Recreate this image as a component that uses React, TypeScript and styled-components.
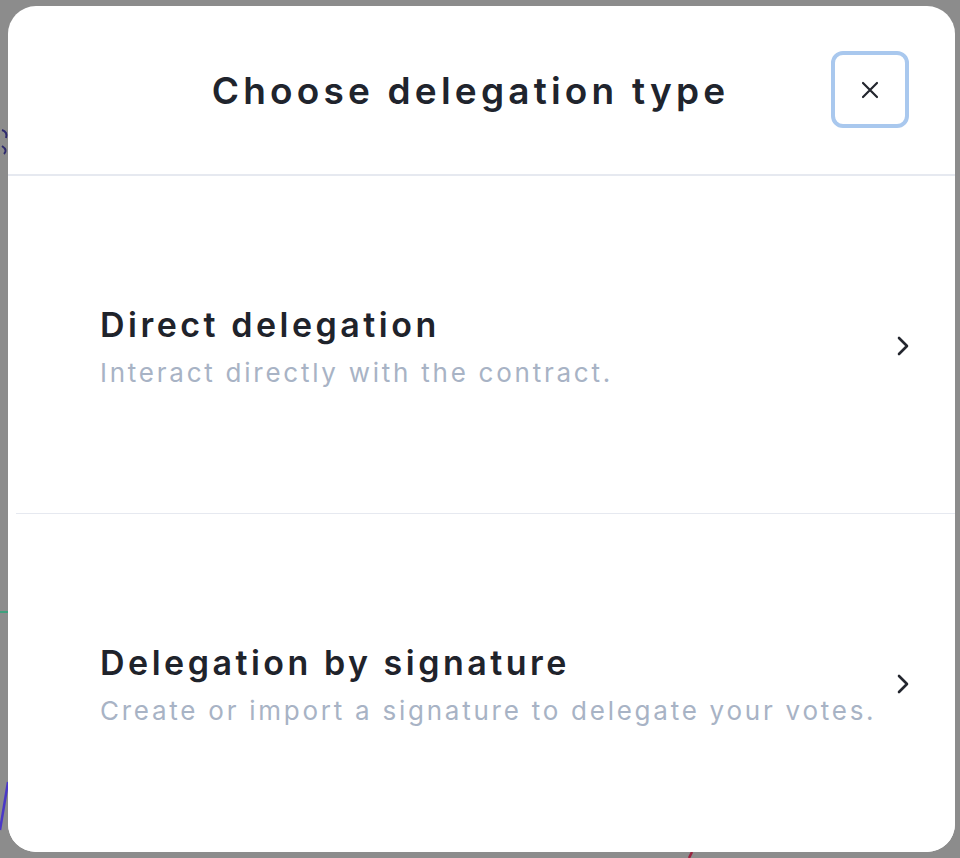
import React from "react";
import styled, { createGlobalStyle } from "styled-components";

const Global = createGlobalStyle`
  html, body { margin: 0; padding: 0; }
  body {
    background: #8c8c8c;
    font-family: Inter, "Noto Sans", sans-serif;
    width: 960px;
    height: 858px;
    overflow: hidden;
  }
`;

const Page = styled.div`
  position: relative;
  width: 960px;
  height: 858px;
  padding: 6px 5px 6px 8px;
  box-sizing: border-box;
`;

const Backdrop = styled.div`
  position: absolute;
  inset: 0;
  pointer-events: none;
`;

const BackdropMark = styled.svg`
  position: absolute;
  left: 0;
  top: 0;
`;

const Card = styled.div`
  position: relative;
  width: 947px;
  height: 846px;
  background: #ffffff;
  border-radius: 28px;
  display: flex;
  flex-direction: column;
  overflow: hidden;
`;

const Header = styled.header`
  height: 168px;
  flex: none;
  display: flex;
  align-items: center;
  justify-content: center;
  position: relative;
  padding-right: 22px;
  border-bottom: 2px solid #e6e9f0;
`;

const Title = styled.h2`
  margin: 0;
  font-size: 37px;
  font-weight: 600;
  color: #20242d;
  letter-spacing: 4.2px;
`;

const CloseButton = styled.button`
  position: absolute;
  right: 46px;
  top: 45px;
  width: 78px;
  height: 77px;
  box-sizing: border-box;
  border: 4px solid #a9c8ee;
  border-radius: 12px;
  background: #fff;
  display: flex;
  align-items: center;
  justify-content: center;
  padding: 0;
  cursor: pointer;
`;

const Option = styled.button<{ $divider?: boolean }>`
  flex: 1;
  display: flex;
  align-items: center;
  justify-content: space-between;
  background: #fff;
  border: none;
  margin: 0;
  padding: 2px 44px 0 92px;
  text-align: left;
  cursor: pointer;
  font-family: inherit;
  position: relative;
  ${(p) =>
    p.$divider
      ? `
    &::after {
      content: "";
      position: absolute;
      left: 8px;
      right: 0;
      bottom: -1px;
      height: 2px;
      background: #e6e9f0;
    }
  `
      : ""}
`;

const TextCol = styled.div`
  display: flex;
  flex-direction: column;
  gap: 12px;
`;

const OptionTitle = styled.div`
  font-size: 34px;
  font-weight: 600;
  color: #1f232b;
  letter-spacing: 3.5px;
`;

const OptionDesc = styled.div`
  font-size: 26px;
  font-weight: 400;
  color: #a8b3c5;
  letter-spacing: 2.75px;
`;

const Chevron = () => (
  <svg width="16" height="22" viewBox="0 0 16 22" fill="none">
    <path d="M4 3 L12 11 L4 19" stroke="#23262e" strokeWidth="2.6" strokeLinecap="round" strokeLinejoin="round" />
  </svg>
);

const CloseIcon = () => (
  <svg width="20" height="20" viewBox="0 0 20 20" fill="none">
    <path d="M3 3 L17 17 M17 3 L3 17" stroke="#23262e" strokeWidth="2.2" strokeLinecap="round" />
  </svg>
);

export default function App() {
  return (
    <>
      <Global />
      <Page>
        <Backdrop>
          <BackdropMark width="960" height="858" viewBox="0 0 960 858">
            <path d="M2 130 Q8 132 6 138 M2 146 Q8 150 4 154" stroke="#2e2a6e" strokeWidth="2" fill="none" />
            <line x1="0" y1="612" x2="8" y2="612" stroke="#3fa07d" strokeWidth="2" />
            <line x1="8" y1="782" x2="0" y2="830" stroke="#4a38c8" strokeWidth="2.5" />
            <line x1="692" y1="852" x2="689" y2="858" stroke="#9a2440" strokeWidth="2.5" />
          </BackdropMark>
        </Backdrop>
        <Card>
          <Header>
            <Title>Choose delegation type</Title>
            <CloseButton aria-label="Close">
              <CloseIcon />
            </CloseButton>
          </Header>
          <Option $divider>
            <TextCol>
              <OptionTitle>Direct delegation</OptionTitle>
              <OptionDesc>Interact directly with the contract.</OptionDesc>
            </TextCol>
            <Chevron />
          </Option>
          <Option>
            <TextCol>
              <OptionTitle>Delegation by signature</OptionTitle>
              <OptionDesc>Create or import a signature to delegate your votes.</OptionDesc>
            </TextCol>
            <Chevron />
          </Option>
        </Card>
      </Page>
    </>
  );
}
